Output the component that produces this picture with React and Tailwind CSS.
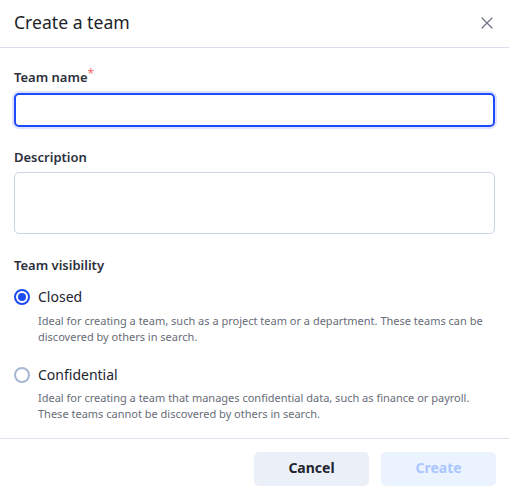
import React from "react";

function Radio({ checked }) {
  return checked ? (
    <span className="w-[16px] h-[16px] rounded-full border-2 border-[#1d4cf2] flex items-center justify-center shrink-0">
      <span className="w-[8px] h-[8px] rounded-full bg-[#1d4cf2]" />
    </span>
  ) : (
    <span className="w-[16px] h-[16px] rounded-full border-2 border-[#a9b8d2] shrink-0" />
  );
}

export default function App() {
  return (
    <div
      className="w-[509px] h-[496px] bg-white text-[#1f2230] flex flex-col"
      style={{ fontFamily: '"Noto Sans", "Open Sans", sans-serif' }}
    >
      <div className="h-[48px] px-[14px] flex items-center justify-between border-b border-[#d9dfec] shrink-0">
        <h1 className="text-[17.6px] leading-[24px] text-[#1c1f2a] -mt-[3px]">Create a team</h1>
        <svg width="12" height="12" viewBox="0 0 12 12" className="mr-[2px] -mt-[2px]">
          <path d="M1 1L11 11M11 1L1 11" stroke="#6b7080" strokeWidth="1.2" strokeLinecap="round" />
        </svg>
      </div>

      <div className="flex-1 px-[14px] pt-[19px] flex flex-col">
        <label className="block h-[20px] text-[13px] leading-[20px] font-semibold text-[#2c303c]">
          Team name<span className="relative -top-[4px] leading-none text-[#f26b6b] text-[12px] font-normal">*</span>
        </label>
        <input
          className="mt-[6px] h-[34px] w-full rounded-[5px] border-2 border-[#1f4bff] shadow-[0_0_0_2px_rgba(31,75,255,0.15)] outline-none px-2"
        />

        <label className="mt-[20px] text-[13px] leading-[20px] font-semibold text-[#2c303c]">Description</label>
        <textarea className="mt-[5px] h-[62px] w-full rounded-[5px] border border-[#ccd6e6] outline-none resize-none px-2" />

        <div className="mt-[21px] text-[13px] leading-[20px] font-semibold text-[#2c303c]">Team visibility</div>

        <div className="mt-[12px] flex items-center gap-[8px]">
          <Radio checked />
          <span className="text-[14px] leading-[20px] text-[#22252f]">Closed</span>
        </div>
        <p className="mt-[6px] ml-[24px] text-[11px] leading-[16px] text-[#686c78]">
          Ideal for creating a team, such as a project team or a department. These teams can be discovered by others in search.
        </p>

        <div className="mt-[20px] flex items-center gap-[8px]">
          <Radio />
          <span className="text-[14px] leading-[20px] text-[#22252f]">Confidential</span>
        </div>
        <p className="mt-[5px] ml-[24px] text-[11px] leading-[16px] text-[#686c78]">
          Ideal for creating a team that manages confidential data, such as finance or payroll. These teams cannot be discovered by others in search.
        </p>
      </div>

      <div className="h-[58px] border-t border-[#dde3ec] px-[13px] flex items-start justify-end gap-[12px] pt-[13px] shrink-0">
        <button className="w-[115px] h-[34px] rounded-[5px] bg-[#ebf0f8] text-[14px] leading-[20px] pb-[2px] font-bold text-[#22252f]">Cancel</button>
        <button className="w-[115px] h-[34px] rounded-[5px] bg-[#ebf3ff] text-[14px] leading-[20px] pb-[2px] font-bold text-[#a9c6ff]">Create</button>
      </div>
    </div>
  );
}
